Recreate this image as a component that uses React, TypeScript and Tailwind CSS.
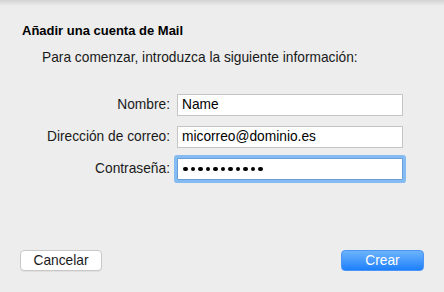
import React from "react";

const font = { fontFamily: '"Liberation Sans", Arial, sans-serif' };

function Field({ label, value, secret = false, focused = false }: { label: string; value: string; secret?: boolean; focused?: boolean }) {
  return (
    <div className="flex items-center h-[22px]">
      <label className="w-[177px] text-right pr-[7px] text-[13.75px] text-[#1a1a1a]">{label}</label>
      <div
        className={
          focused
            ? "w-[226px] h-[22px] bg-white border border-[#6a9fd8] ring-[3px] ring-[#84bbf3] rounded-[1px] flex items-center px-[4px]"
            : "w-[226px] h-[22px] bg-white border border-[#c4c4c4] flex items-center px-[4px]"
        }
      >
        {secret ? (
          <div className="flex gap-[3px] pl-[1px]">
            {value.split("").map((_, i) => (
              <span key={i} className="w-[4.5px] h-[4.5px] rounded-full bg-black" />
            ))}
          </div>
        ) : (
          <span className="text-[13.75px] text-black leading-none">{value}</span>
        )}
      </div>
    </div>
  );
}

export default function App() {
  return (
    <div className="relative w-[444px] h-[292px] bg-[#ededed] flex flex-col text-[#1a1a1a]" style={font}>
      <div className="absolute top-0 left-0 right-0 h-[6px] bg-gradient-to-b from-[#d2d2d2] to-[#ededed]" />

      <h1 className="pl-[22px] pt-[23px] text-[13px] leading-4 font-bold text-black">Añadir una cuenta de Mail</h1>
      <p className="pl-[42px] mt-[11px] text-[13.75px] leading-4">
        Para comenzar, introduzca la siguiente información:
      </p>

      <div className="mt-[28px] flex flex-col gap-[10px]">
        <Field label="Nombre:" value="Name" />
        <Field label="Dirección de correo:" value="micorreo@dominio.es" />
        <Field label="Contraseña:" value="xxxxxxxxxxx" secret focused />
      </div>

      <div className="mt-auto mb-[21px] flex justify-between px-[20px]">
        <button className="w-[82px] h-[21px] bg-white border border-[#c8c8c8] rounded-[4px] text-[13.75px] text-[#1a1a1a] shadow-[0_1px_0_rgba(0,0,0,0.05)]">
          Cancelar
        </button>
        <button className="w-[83px] h-[21px] rounded-[4px] text-[13.75px] text-white bg-gradient-to-b from-[#6bb3fb] to-[#1a7ffb] border border-[#4c95f6]">
          Crear
        </button>
      </div>
    </div>
  );
}
